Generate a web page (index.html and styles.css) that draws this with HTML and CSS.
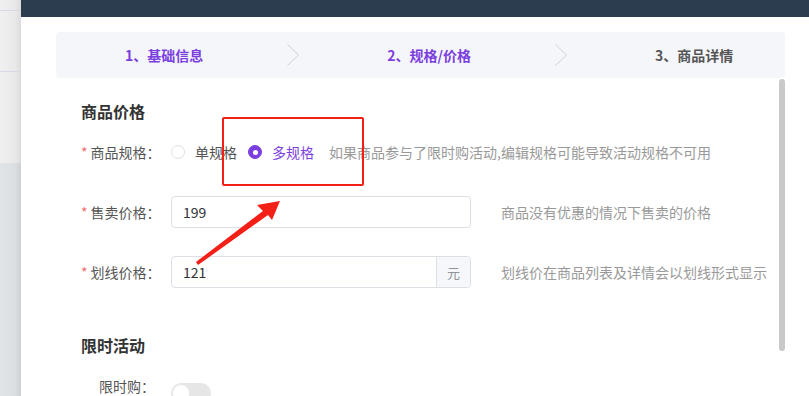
FILE: index.html
```html
<!DOCTYPE html>
<html>
  <head>
    <title>商品编辑</title>
    <link rel="stylesheet" href="styles.css">
  </head>

  <body>
    <div class="page">
      <div class="sidebar">
        <div class="sidebar-top">
          <div class="sidebar-line"></div>
          <div class="sidebar-line"></div>
        </div>
        <div class="sidebar-bottom"></div>
      </div>

      <div class="main">
        <div class="topbar"></div>

        <div class="content">
          <div class="steps">
            <div class="step active">1、基础信息</div>
            <svg class="step-arrow" width="12" height="22" viewBox="0 0 12 22">
              <path d="M0.5 0.5 L11.5 11 L0.5 21.5" fill="none" stroke="#cfd1d6" stroke-width="1"/>
            </svg>
            <div class="step active">2、规格/价格</div>
            <svg class="step-arrow" width="12" height="22" viewBox="0 0 12 22">
              <path d="M0.5 0.5 L11.5 11 L0.5 21.5" fill="none" stroke="#cfd1d6" stroke-width="1"/>
            </svg>
            <div class="step">3、商品详情</div>
          </div>

          <div class="panel">
            <div class="form">
              <div class="section-title">商品价格</div>

              <div class="form-item">
                <div class="form-label"><span class="required">*</span>商品规格：</div>
                <div class="radio-group">
                  <label class="radio">
                    <span class="radio-dot"></span>
                    <span class="radio-text">单规格</span>
                  </label>
                  <label class="radio checked">
                    <span class="radio-dot"></span>
                    <span class="radio-text">多规格</span>
                  </label>
                </div>
                <div class="hint hint-inline">如果商品参与了限时购活动,编辑规格可能导致活动规格不可用</div>
              </div>

              <div class="form-item">
                <div class="form-label"><span class="required">*</span>售卖价格：</div>
                <div class="input">
                  <span class="input-value">199</span>
                </div>
                <div class="hint">商品没有优惠的情况下售卖的价格</div>
              </div>

              <div class="form-item section-end">
                <div class="form-label"><span class="required">*</span>划线价格：</div>
                <div class="input">
                  <span class="input-value">121</span>
                  <span class="input-append">元</span>
                </div>
                <div class="hint">划线价在商品列表及详情会以划线形式显示</div>
              </div>

              <div class="section-title">限时活动</div>

              <div class="form-item">
                <div class="form-label">限时购：</div>
                <div class="switch"><span class="switch-knob"></span></div>
              </div>
            </div>

            <div class="scrollbar"><div class="scroll-thumb"></div></div>
          </div>
        </div>
      </div>
    </div>

    <!-- annotation drawn over the screenshot -->
    <div class="mark-box"></div>
    <svg class="mark-arrow" width="809" height="396" viewBox="0 0 809 396">
      <polygon points="196,262 263,211 257,205 280,201 272,220 268,215 198,265" fill="#f41f16"/>
    </svg>
  </body>
</html>
```

FILE: styles.css
```css
* {
  box-sizing: border-box;
  margin: 0;
  padding: 0;
}

body {
  width: 809px;
  height: 396px;
  overflow: hidden;
  background: #fff;
  font-family: "Noto Sans CJK SC", "Noto Sans", sans-serif;
  font-size: 14px;
  color: #555;
  position: relative;
}

.page {
  display: flex;
  height: 100%;
}

/* left strip of the page behind the dialog */
.sidebar {
  width: 21px;
  display: flex;
  flex-direction: column;
}

.sidebar-top {
  height: 163px;
  background: linear-gradient(to right, #f0f0f0, #e9e9e9 70%, #dcdcdc);
  padding-top: 10px;
}

.sidebar-line {
  height: 1px;
  background: #dad8e4;
  margin-bottom: 60px;
}

.sidebar-bottom {
  flex: 1;
  background: linear-gradient(to right, #e1e4e7, #dcdfe2 70%, #cdd0d3);
}

.main {
  flex: 1;
  display: flex;
  flex-direction: column;
}

.topbar {
  height: 17px;
  background: #2d3d50;
}

.content {
  flex: 1;
  padding: 15px 24px 0 35px;
  display: flex;
  flex-direction: column;
  min-height: 0;
}

/* steps */
.steps {
  height: 46px;
  background: #f5f6fa;
  border-radius: 4px;
  display: flex;
  align-items: center;
  padding-left: 69px;
}

.step {
  font-weight: 700;
  color: #555;
  white-space: nowrap;
}

.step.active {
  color: #7b3fe0;
}

.step-arrow {
  margin: 0 88px 0 84px;
  flex-shrink: 0;
}

/* form panel */
.panel {
  flex: 1;
  display: flex;
  min-height: 0;
}

.form {
  flex: 1;
  padding: 22px 0 0 25px;
}

.section-title {
  font-size: 16px;
  line-height: 22px;
  font-weight: 700;
  color: #333;
  margin-bottom: 14px;
}

.form-item {
  display: flex;
  align-items: center;
  height: 32px;
  margin-bottom: 28px;
}

.form-item.section-end {
  margin-bottom: 46px;
}

.form-label {
  width: 90px;
  padding-right: 16px;
  text-align: right;
  white-space: nowrap;
  color: #555;
}

.required {
  color: #f56c6c;
  margin-right: 3px;
}

.radio-group {
  display: flex;
  align-items: center;
  gap: 11px;
}

.radio {
  display: flex;
  align-items: center;
  gap: 10px;
  color: #555;
}

.radio-dot {
  width: 14px;
  height: 14px;
  border: 1px solid #dcdfe6;
  border-radius: 50%;
  background: #fff;
  display: flex;
  align-items: center;
  justify-content: center;
}

.radio.checked .radio-dot {
  border-color: #7b3fe0;
  background: #7b3fe0;
}

.radio.checked .radio-dot::after {
  content: "";
  width: 5px;
  height: 5px;
  border-radius: 50%;
  background: #fff;
}

.radio.checked .radio-text {
  color: #7b3fe0;
}

.hint {
  color: #999;
  margin-left: 30px;
  white-space: nowrap;
}

.hint.hint-inline {
  margin-left: 15px;
}

.input {
  width: 300px;
  height: 32px;
  border: 1px solid #dcdfe6;
  border-radius: 4px;
  display: flex;
  align-items: center;
  overflow: hidden;
}

.input-value {
  flex: 1;
  padding-left: 11px;
  color: #333;
}

.input-append {
  width: 34px;
  height: 100%;
  background: #f5f7fa;
  border-left: 1px solid #dcdfe6;
  color: #909399;
  font-size: 13px;
  display: flex;
  align-items: center;
  justify-content: center;
}

.switch {
  width: 40px;
  height: 20px;
  border-radius: 10px;
  background: #e6e6e6;
  padding: 2px;
  margin-top: 14px;
}

.switch-knob {
  display: block;
  width: 16px;
  height: 16px;
  border-radius: 50%;
  background: #fff;
}

.scrollbar {
  width: 6px;
  padding-top: 1px;
}

.scroll-thumb {
  height: 272px;
  border-radius: 3px;
  background: #c9c9c9;
}

/* red annotation */
.mark-box {
  position: absolute;
  left: 222px;
  top: 117px;
  width: 142px;
  height: 69px;
  border: 2px solid #f41f16;
  border-radius: 2px;
}

.mark-arrow {
  position: absolute;
  left: 0;
  top: 0;
  pointer-events: none;
}
```
